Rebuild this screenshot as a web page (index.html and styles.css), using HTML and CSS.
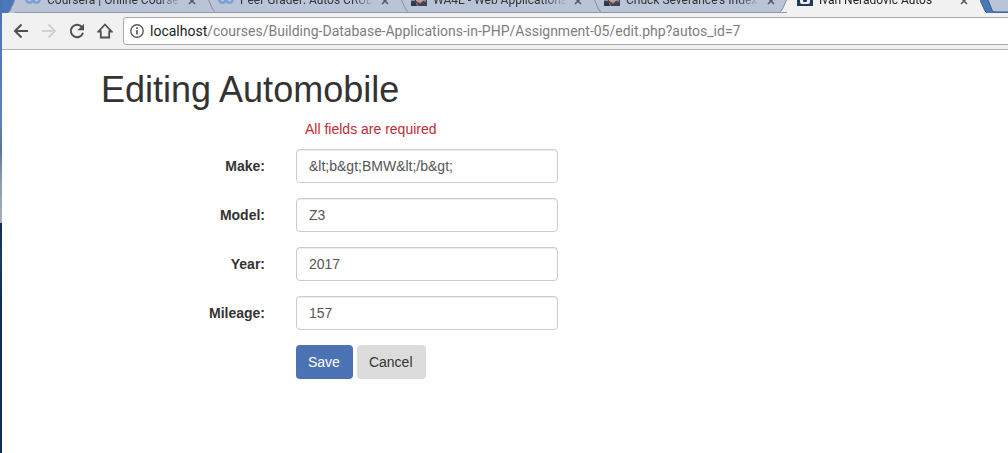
FILE: index.html
```html
<!DOCTYPE html>
<html lang="en">
<head>
<meta charset="utf-8">
<title>Ivan Neradovic Autos</title>
<link rel="stylesheet" href="styles.css">
</head>
<body>
<svg class="defs" aria-hidden="true">
  <symbol id="close" viewBox="0 0 8 8"><path d="M1 1l6 6M7 1L1 7" stroke="#555b66" stroke-width="1.6"/></symbol>
  <symbol id="coursera" viewBox="0 0 16 16"><circle cx="4.5" cy="9.500" r="3.2" fill="none" stroke="#7f9fd9" stroke-width="2.6"/><circle cx="11.5" cy="9.500" r="3.2" fill="none" stroke="#7f9fd9" stroke-width="2.6"/></symbol>
  <symbol id="portrait" viewBox="0 0 16 16"><path fill="#3d4456" d="M0 0h16v16H0z"/><path fill="#7d8ba6" d="M0 0h4v11H0z"/><path fill="#c39c8d" d="M5 2h7v9l-3 3-4-3z"/><path fill="#72504f" d="M5 11l4 2 3-2v1l-3 2-4-2z"/><path fill="#7d8ba6" d="M12 9h3v3l-3-1zM3 13h3l1 3H5z"/><path fill="#303648" d="M0 12l5 1 1 3H0z"/></symbol>
  <symbol id="divider" viewBox="0 0 7 13"><path d="M0 0l5 11 2 1.500" fill="none" stroke="#858e9e"/></symbol>
</svg>
<div class="window">
  <header class="browser">
    <nav class="tabs" aria-label="Tabs">
      <svg class="cap" viewBox="0 0 7 13"><path d="M7 0L2 11l-2 2h7z" fill="#b9c4d7"/><path d="M7 0L2 11l-2 1.500" fill="none" stroke="#8492aa"/></svg>
      <div class="tab">
        <span class="edge"></span>
        <svg class="favicon"><use href="#coursera"/></svg>
        <span class="name">Coursera | Online Courses</span>
        <button class="close" aria-label="Close tab"><svg><use href="#close"/></svg></button>
      </div>
      <div class="tab">
        <svg class="edge"><use href="#divider"/></svg>
        <svg class="favicon"><use href="#coursera"/></svg>
        <span class="name">Peer Grader: Autos CRUD</span>
        <button class="close" aria-label="Close tab"><svg><use href="#close"/></svg></button>
      </div>
      <div class="tab">
        <svg class="edge"><use href="#divider"/></svg>
        <svg class="favicon"><use href="#portrait"/></svg>
        <span class="name">WA4E - Web Applications</span>
        <button class="close" aria-label="Close tab"><svg><use href="#close"/></svg></button>
      </div>
      <div class="tab">
        <svg class="edge"><use href="#divider"/></svg>
        <svg class="favicon"><use href="#portrait"/></svg>
        <span class="name">Chuck Severance's Index</span>
        <button class="close" aria-label="Close tab"><svg><use href="#close"/></svg></button>
        <svg class="cap" viewBox="0 0 7 13"><path d="M7 0L2 11l-2 2h7z" fill="#f1f1f1"/><path d="M7 0L2 11l-2 1.500" fill="none" stroke="#858e9e"/></svg>
      </div>
      <div class="tab active">
        <span class="edge"></span>
        <svg class="favicon" viewBox="0 0 16 16"><path fill="#24375f" d="M0 0h16v16H0z"/><path fill="#e8edf5" d="M3 1h10v11q0 2-2 2H5q-2 0-2-2z"/><rect x="6" y="7" width="4" height="5" rx="1" fill="#24375f"/></svg>
        <span class="name">Ivan Neradovic Autos</span>
        <button class="close" aria-label="Close tab"><svg><use href="#close"/></svg></button>
      </div>
      <svg class="cap" viewBox="0 0 7 13"><path d="M0 0l5 11 2 2H0z" fill="#f1f1f1"/><path d="M0 0l5 11 2 2" fill="none" stroke="#3c629d"/></svg>
      <button class="new-tab" aria-label="New tab"><svg viewBox="0 0 28 13"><path d="M1 0l4 10q1 2 3 2h20V0z" fill="#b9c4d7"/><path d="M1 0l4 10q1 2 3 2h20" fill="none" stroke="#31578f"/></svg></button>
    </nav>
    <div class="toolbar">
      <button class="tool" aria-label="Back"><svg viewBox="0 0 16 16"><path d="M15 8H2M8.500 1.500L2 8l6.500 6.500" fill="none" stroke="#505050" stroke-width="2"/></svg></button>
      <button class="tool" aria-label="Forward" disabled><svg viewBox="0 0 16 16"><path d="M1 8h13M7.500 1.500L14 8l-6.500 6.500" fill="none" stroke="#d0d0d0" stroke-width="2"/></svg></button>
      <button class="tool" aria-label="Reload"><svg viewBox="0 0 16 16"><path d="M13 4.200A6.200 6.200 0 1 0 14 9.800" fill="none" stroke="#505050" stroke-width="2"/><path d="M15 .8v6.500H8.500z" fill="#505050"/></svg></button>
      <button class="tool" aria-label="Home"><svg viewBox="0 0 16 16"><path d="M8 1.500L1.500 8.500h2.300v6h8.400v-6h2.300z" fill="none" stroke="#505050" stroke-width="1.800"/></svg></button>
      <div class="address">
        <svg viewBox="0 0 14 14"><circle cx="7" cy="7" r="6.200" fill="none" stroke="#5a5a5a" stroke-width="1.400"/><path d="M7 6v4.500M7 3.300v1.700" stroke="#5a5a5a" stroke-width="1.700"/></svg>
        <span class="url"><span class="host">localhost</span>/courses/Building-Database-Applications-in-PHP/Assignment-05/edit.php?autos_id=7</span>
      </div>
    </div>
  </header>
  <main class="page">
    <h1>Editing Automobile</h1>
    <form class="form">
      <p class="error">All fields are required</p>
      <label for="make">Make:</label>
      <input id="make" type="text" value="&amp;lt;b&amp;gt;BMW&amp;lt;/b&amp;gt;">
      <label for="model">Model:</label>
      <input id="model" type="text" value="Z3">
      <label for="year">Year:</label>
      <input id="year" type="text" value="2017">
      <label for="mileage">Mileage:</label>
      <input id="mileage" type="text" value="157">
      <div class="actions">
        <button class="btn primary" type="submit">Save</button>
        <button class="btn" type="button">Cancel</button>
      </div>
    </form>
  </main>
</div>
</body>
</html>
```

FILE: styles.css
```css
* {
  box-sizing: border-box;
}

body {
  margin: 0;
  font: 14px/20px "Liberation Sans", Arial, sans-serif;
  color: #333;
  background: #fff;
}

button {
  font: inherit;
  border: 0;
  padding: 0;
  background: none;
}

svg {
  display: block;
  flex: none;
}

.defs {
  position: absolute;
  width: 0;
  height: 0;
}

.window {
  min-height: 100vh;
  padding-left: 2px;
  overflow: hidden;
  background: linear-gradient(#4773b3 0, #5d82ba 120px, #56779f 150px, #8b99ad 180px, #a9b0bb 223px, #0d2b5c 223px, #16396e 260px, #0d2b5c 300px) left / 2px 100% no-repeat #fff;
}

.browser {
  background: #f1f1f1;
}

.tabs {
  display: flex;
  align-items: flex-end;
  height: 13px;
  padding-left: 6px;
  overflow: hidden;
  background: #4b77b7;
  font: 12px/16px Roboto, "Noto Sans", sans-serif;
  color: #2f343d;
}

.cap,
.edge {
  flex: none;
  width: 7px;
  height: 13px;
  align-self: flex-end;
}

.tab {
  display: flex;
  align-items: center;
  flex: none;
  width: 193px;
  height: 29px;
  background: #b9c4d7;
  border-bottom: 1px solid #8c97aa;
}

.active {
  color: #222;
  background: #f1f1f1;
  border-color: #f1f1f1;
}

.favicon {
  width: 16px;
  height: 16px;
  margin: 0 6px 0 3px;
}

.name {
  flex: none;
  width: 132px;
  padding-top: 4px;
  overflow: hidden;
  white-space: nowrap;
  mask-image: linear-gradient(90deg, #000 112px, transparent 134px);
}

.close {
  margin: 5px auto 0 9px;
}

.close svg {
  width: 8px;
  height: 8px;
}

.new-tab svg {
  width: 28px;
  height: 13px;
}

.toolbar {
  display: flex;
  align-items: center;
  height: 37px;
  padding-left: 11px;
  border-bottom: 1px solid #b4b4b4;
}

.tool {
  flex: none;
  margin-right: 12px;
}

.tool svg {
  width: 16px;
  height: 16px;
}

.address {
  display: flex;
  flex: 1;
  align-items: center;
  gap: 6px;
  height: 28px;
  margin-right: -4px;
  margin-left: -2px;
  padding-left: 6px;
  border: 1px solid #aaa;
  border-radius: 3px;
  background: #fff;
}

.address svg {
  width: 14px;
  height: 14px;
}

.url {
  font: 14px/20px Roboto, "Noto Sans", sans-serif;
  color: #7d7d7d;
  white-space: nowrap;
}

.host {
  color: #222;
}

.page {
  padding: 20px 15px 20px 99px;
}

h1 {
  margin: 0 0 9px;
  font-size: 36px;
  font-weight: 500;
  line-height: 40px;
}

.form {
  display: grid;
  grid-template-columns: 164px minmax(0, 262px);
  align-items: center;
  gap: 15px 31px;
}

.error {
  grid-column: 2;
  margin: 0 0 -5px 9px;
  color: #c02a35;
}

label {
  font-weight: 700;
  text-align: right;
}

input {
  width: 100%;
  height: 34px;
  padding: 6px 12px;
  font: inherit;
  color: #555;
  background: #fff;
  border: 1px solid #ccc;
  border-radius: 4px;
  box-shadow: inset 0 1px 1px rgba(0, 0, 0, 0.075);
}

.actions {
  display: flex;
  grid-column: 2;
  gap: 4px;
}

.btn {
  padding: 7px 13px 7px 12px;
  border-radius: 4px;
  color: #333;
  background: #dcdcdc;
}

.primary {
  color: #fff;
  background: #4b73b4;
}
```
